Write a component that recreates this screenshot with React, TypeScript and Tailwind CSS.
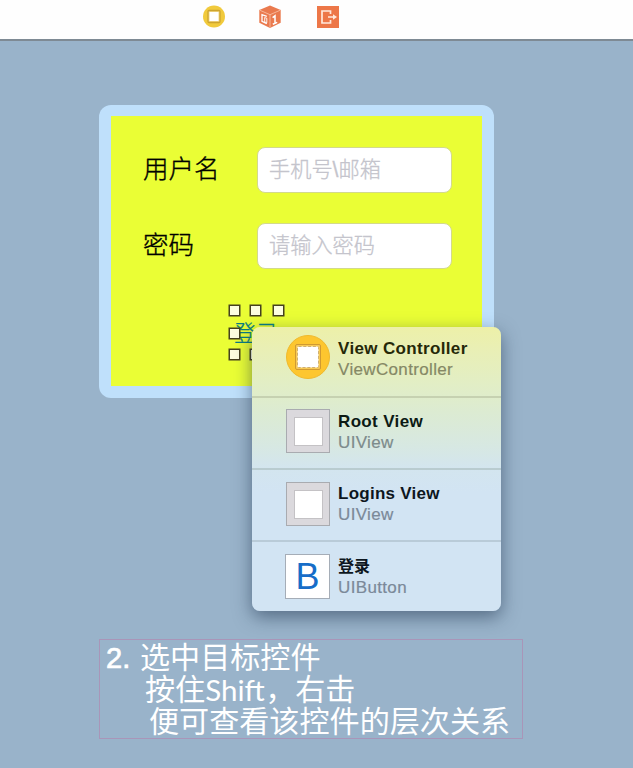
import React from "react";

const cjk = "font-['Liberation_Sans','Noto_Sans_CJK_SC',sans-serif]";

function ControllerIcon() {
  return (
    <svg width="24" height="24" viewBox="0 0 24 24">
      <circle cx="12" cy="11.500" r="11" fill="#f1ca3c" />
      <rect x="6" y="5.500" width="12" height="12" rx="1" fill="#f3d98a" stroke="#cda52f" strokeWidth="1.300" />
      <rect x="7.500" y="7" width="9" height="9" fill="#fff" />
    </svg>
  );
}

function ResponderIcon() {
  return (
    <svg width="24" height="24" viewBox="0 0 24 24">
      <path d="M12 .5 22.700 5v12.700L12 23 1.300 17.700V5Z" fill="#ea7a4e" />
      <path d="M1.700 5.200 12 9.700 22.300 5.200M12 9.700V22.500" fill="none" stroke="#f7b698" strokeWidth="1" />
      <path d="M8.800 11.300 4 9.600v6.800l4.800 2.200" fill="none" stroke="#fff" strokeWidth="1.300" />
      <path d="M6.700 12.500l2.100.8v4.500l-2.100-.9Z" fill="none" stroke="#fff" strokeWidth=".9" />
      <path d="M14.600 12.700l2.400-1.900v7.800M14.800 19.300l4.400-1.900" fill="none" stroke="#fff" strokeWidth="1.500" />
    </svg>
  );
}

function ExitIcon() {
  return (
    <svg width="22" height="22" viewBox="0 0 22 22">
      <rect width="22" height="22" fill="#ed7748" />
      <path d="M13.500 8V5H5v12h8.500v-3M11 11h6" fill="none" stroke="#ffe9dc" strokeWidth="1.700" />
      <path d="M16 8.200l4 2.800-4 2.800Z" fill="#ffe9dc" />
    </svg>
  );
}

function PopupControllerIcon() {
  return (
    <svg width="44" height="44" viewBox="0 0 44 44">
      <circle cx="22" cy="22" r="21.500" fill="#fdc62f" stroke="#efb92d" />
      <rect x="9.500" y="9.500" width="25" height="25" rx="1.500" fill="#f8ca55" stroke="#d09a32" />
      <rect x="11.500" y="11.500" width="21" height="21" rx="1" fill="#fff" stroke="#d0b070" strokeDasharray="3 1.800" />
    </svg>
  );
}

function ViewIcon() {
  return (
    <div className="flex h-11 w-11 items-center justify-center border border-[#a9abb0] bg-[#dbd9dd]">
      <div className="h-[29px] w-[29px] border border-[#c4c2c5] bg-white" />
    </div>
  );
}

function ButtonIcon() {
  return (
    <div className="-ml-px flex h-[45px] w-[45px] items-center justify-center border border-[#a5adb7] bg-white text-[36px] leading-none text-[#166dc8]">
      B
    </div>
  );
}

function Field({ label, hint }: { label: string; hint: string }) {
  return (
    <div className="flex h-[46px] items-center">
      <span className="w-[114px] text-[25.500px] font-light leading-none text-black [-webkit-text-stroke:0.35px_#000]">{label}</span>
      <div className="flex h-[46px] w-[195px] items-center rounded-lg border border-[#d3d98c] bg-white pl-[11px] text-[21.200px] font-light leading-none text-[#c4c4cc] [-webkit-text-stroke:0.3px_#c4c4cc]">
        {hint}
      </div>
    </div>
  );
}

function Handle({ className }: { className: string }) {
  return <i className={`absolute h-[11px] w-[11px] border-[1.500px] border-[#454020] bg-[#fdfee0] shadow-[0_0_0_0.5px_#454020] ${className}`} />;
}

function Entry({ icon, title, kind, className, titleClass, kindClass }: { icon: React.ReactNode; title: string; kind: string; className: string; titleClass: string; kindClass: string }) {
  return (
    <div className={`flex pl-[34px] ${className}`}>
      <div className="w-[52px] shrink-0">{icon}</div>
      <div className="pt-[2px]">
        <div className={`whitespace-nowrap font-bold leading-[21px] ${titleClass}`}>{title}</div>
        <div className={`whitespace-nowrap text-[17px] leading-[21px] tracking-[0.350px] [-webkit-text-stroke:0.2px_currentColor] ${kindClass}`}>{kind}</div>
      </div>
    </div>
  );
}

export default function App() {
  return (
    <div className={`relative flex h-[768px] w-[633px] flex-col overflow-hidden bg-[#99b3ca] ${cjk}`}>
      <header className="flex h-[41px] shrink-0 border-b-2 border-[#7e8a94] bg-[#fefefe] pl-[202px] pt-[5px]">
        <div className="w-14"><ControllerIcon /></div>
        <div className="w-[59px]"><ResponderIcon /></div>
        <div className="pt-px"><ExitIcon /></div>
      </header>
      <main className="flex flex-col pl-[99px] pt-16">
        <section className="relative h-[293px] w-[395px] rounded-xl bg-[#bfe0fb] px-3 py-[11px]">
          <div className="flex h-[270px] w-[371px] flex-col gap-[30px] bg-[#eafe35] pl-8 pt-[31px]">
            <Field label="用户名" hint={"手机号\\邮箱"} />
            <Field label="密码" hint="请输入密码" />
          </div>
          <span className="absolute left-[135px] top-[217px] text-[22px] font-light leading-[24px] text-[#087d83] [-webkit-text-stroke:0.3px_#087d83]">登录</span>
          <Handle className="left-[130px] top-[200px]" />
          <Handle className="left-[151px] top-[200px]" />
          <Handle className="left-[174px] top-[200px]" />
          <Handle className="left-[130px] top-[223px]" />
          <Handle className="left-[130px] top-[244px]" />
          <Handle className="left-[151px] top-[244px]" />
        </section>
        <section className="mt-[241px] h-[100px] w-[424px] border border-[#a995b8] pl-[6px] pt-[2px] text-[30.100px] leading-[32px] text-white">
          <p className="flex whitespace-nowrap"><span className="w-[34px] text-[29px] [-webkit-text-stroke:0.7px_#fff]">2.</span><span>选中目标控件</span></p>
          <p className="flex whitespace-nowrap pl-[39px]"><span>按住</span><span className="w-[60px] font-['Lato'] text-[29.500px] font-normal">Shift</span><span>，右击</span></p>
          <p className="whitespace-nowrap pl-[43px]">便可查看该控件的层次关系</p>
        </section>
      </main>
      <aside className="absolute left-[252px] top-[327px] flex h-[284px] w-[249px] flex-col rounded-lg bg-[linear-gradient(180deg,#edf0a8_0%,#e9efb5_8%,#e2eec5_20%,#dcebd2_30%,#d7e8e2_42%,#d3e5ef_50%,#d2e4f3_58%,#d2e4f3_100%)] shadow-[0_6px_18px_rgba(30,50,75,0.550)]">
        <Entry className="h-[71px] shrink-0 border-b-2 border-[#c6d1b1] pt-2" icon={<PopupControllerIcon />} title="View Controller" kind="ViewController" titleClass="relative top-px text-[17px] tracking-[0.350px] text-[#252808]" kindClass="relative top-px text-[#858865]" />
        <Entry className="h-[72px] shrink-0 border-b-2 border-[#b9ccd0] pt-[11px]" icon={<ViewIcon />} title="Root View" kind="UIView" titleClass="text-[17px] tracking-[0.350px] text-[#0c1a14]" kindClass="text-[#7d8b8c]" />
        <Entry className="h-[72px] shrink-0 border-b-2 border-[#b9cbd8] pt-3" icon={<ViewIcon />} title="Logins View" kind="UIView" titleClass="relative -top-px text-[17px] tracking-[0.250px] text-[#0d1620]" kindClass="relative -top-px text-[#7b8999]" />
        <Entry className="pt-[12px]" icon={<ButtonIcon />} title="登录" kind="UIButton" titleClass="text-[16px] text-[#0d1620]" kindClass="text-[#7b8999]" />
      </aside>
    </div>
  );
}
